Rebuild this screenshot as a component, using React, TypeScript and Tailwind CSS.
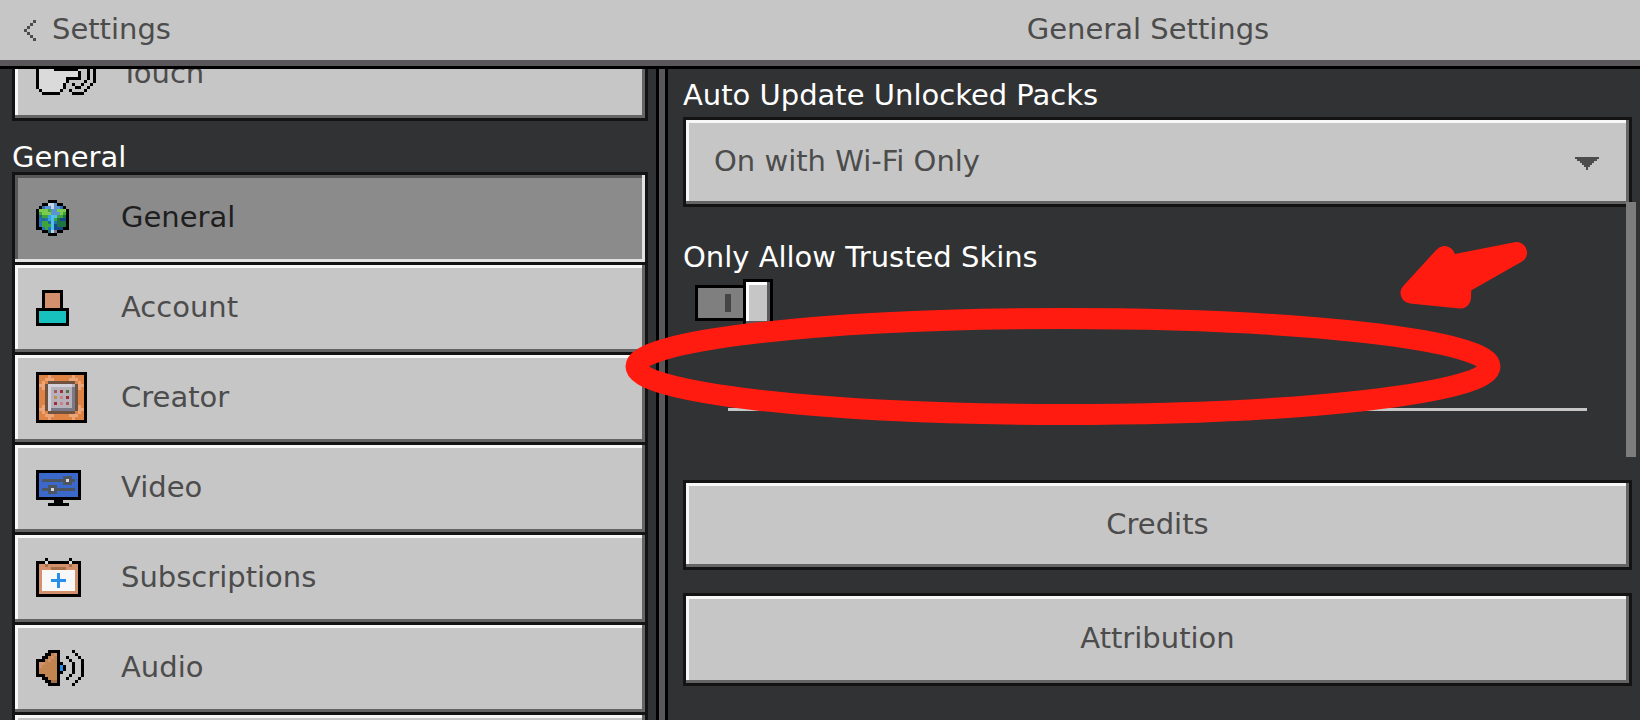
import React, { useState } from 'react';
import clsx from 'clsx';

const PALETTE: Record<string, string> = {
  K: '#000000',
  W: '#f8f8f8',
  L: '#c4d6e6',
  G: '#3fa53a',
  h: '#7ccb4f',
  E: '#1d7443',
  D: '#1f6f86',
  b: '#5b93d0',
  B: '#2570b8',
  C: '#3aa0de',
  c: '#4cc0f0',
  N: '#17488f',
  S: '#d3906c',
  T: '#17c1bd',
  O: '#df8344',
  P: '#eba579',
  R: '#6f5340',
  F: '#d3d0d9',
  f: '#b7b1bb',
  g: '#7b7888',
  r: '#9a3036',
  m: '#a35a5a',
  p: '#c98287',
  e: '#4c7340',
  y: '#bb9248',
  V: '#3b69cb',
  s: '#4d5560',
  q: '#a87048',
  u: '#2a8fea',
  Q: '#c2854f',
  w: '#dadada',
};

const GLOBE = [
  '....KKK....',
  '..KKLLbKK..',
  '.KBbbLbbBK.',
  'KhhhGbbhhhK',
  'KGhhhbbbhGK',
  'KDGGCccGGEK',
  'KBDBCcGENNK',
  'KBGGDcBEEEK',
  'KBGGGcNEEEK',
  'KKBGBcNNNKK',
  '..KKDLgKK..',
  '....KKK....',
];

const ACCOUNT = [
  '..KKKKKKK..',
  '..KSSSSSK..',
  '..KSSSSSK..',
  '..KSSSSSK..',
  '..KSSSSSK..',
  '..KSSSSSK..',
  'KKKKKKKKKKK',
  'KTTTTTTTTTK',
  'KTTTTTTTTTK',
  'KTTTTTTTTTK',
  'KTTTTTTTTTK',
  'KKKKKKKKKKK',
];

const CREATOR = [
  'KKKKKKKKKKKKKKKKK',
  'KOOOPOOOOOOOPOOOK',
  'KOOPPPOOOOOPPPOOK',
  'KOPORRRRRRRRROPOK',
  'KPPRFFFFFFFFfRPPK',
  'KOPRFfffffffgRPOK',
  'KOORFfmfrfefgROOK',
  'KOORFfffffffgROOK',
  'KOORFfyfpfrfgROOK',
  'KOORFfffffffgROOK',
  'KOORFfrfpfmfgROOK',
  'KOPRFfffffffgRPOK',
  'KPPRFggggggggRPPK',
  'KOPORRRRRRRRROPOK',
  'KOOPPPOOOOOPPPOOK',
  'KOOOPOOOOOOOPOOOK',
  'KKKKKKKKKKKKKKKKK',
];

const VIDEO = [
  'KKKKKKKKKKKKKKK',
  'KVVVVVVVVVVVVVK',
  'KVVVVVVVVsssVVK',
  'KVsssssssswssVK',
  'KVVVVVVVVsssVVK',
  'KVVVsssVVVVVVVK',
  'KVssswsssssssVK',
  'KVVVsssVVVVVVVK',
  'KVVVVVVVVVVVVVK',
  'KKKKKKKKKKKKKKK',
  '......KKK......',
  '....KKKKKKK....',
];

const SUBSCRIPTIONS = [
  '...K.......K...',
  'KKKwKKKKKKKwKKK',
  'KSSqSSSSSSSqSSK',
  'KSSSSqqqqqSSSSK',
  'KSWWWWWWWWWWWSK',
  'KSWWWWWuWWWWWSK',
  'KSWWWWWuWWWWWSK',
  'KSWWWuuuuuWWWSK',
  'KSWWWWWuWWWWWSK',
  'KSWWWWWuWWWWWSK',
  'KSWWWWWWWWWWWSK',
  'KSSSSSSSSSSSSSK',
  'KKKKKKKKKKKKKKK',
];

const AUDIO = [
  '....KKKK....K...',
  '...KKQSK.....K..',
  '..KKQSQK..K...K.',
  'KKKQSQQK...K...K',
  'KSSQQQQKK...K..K',
  'KSQQQQQKuK..K..K',
  'KQQQQQQKuK..K..K',
  'KQQQQQQKK...K..K',
  'KKKQQQQK...K...K',
  '..KKQQQK..K...K.',
  '...KKqqK.....K..',
  '....KKKK....K...',
];

const TOUCH = [
  '....KKK.............',
  '...KwwwK............',
  '...KwwwK......K.....',
  '..KwwwwK.......K.K..',
  '.KwwwwwwK.......K.K.',
  'KwwwwwKKKKKKKK...K.K',
  'KwwwwwwwwwwwwwK..K.K',
  'KwwwwwwwwwwwwwK..K.K',
  'KwwwwwwwwwKKKKK..K.K',
  'KwwwwwwwwwK.....K..K',
  'KwwwwwwwwK..K..K..K.',
  'KwwwwwwwwK...KK..K..',
  '.KwwwwwwK..K....K...',
  '..KKKKKK....KKKK....',
];

interface PixelIconProps {
  rows: string[];
}

// Every character of a row is one art pixel, drawn 3px wide
const PixelIcon: React.FC<PixelIconProps> = ({ rows }) => {
  const cols = rows[0].length;
  return (
    <svg
      width={cols * 3}
      height={rows.length * 3}
      viewBox={`0 0 ${cols} ${rows.length}`}
      shapeRendering="crispEdges"
      aria-hidden="true"
    >
      {rows.flatMap((row, y) =>
        row.split('').map((cell, x) =>
          cell === '.' ? null : <rect key={`${x}-${y}`} x={x} y={y} width={1} height={1} fill={PALETTE[cell]} />
        )
      )}
    </svg>
  );
};

const RAISED =
  'border-[3px] border-[#131313] bg-[#c6c6c6] text-[#4c4c4c] shadow-[inset_-3px_-3px_0_#636463,inset_3px_3px_0_#f7f7f7]';
const PRESSED =
  'border-[3px] border-[#131313] bg-[#8b8b8b] text-[#1e1e1e] shadow-[inset_-3px_-3px_0_#e2e2e2,inset_3px_3px_0_#585859]';

interface NavButtonProps {
  label: string;
  rows?: string[];
  active?: boolean;
  onClick?: () => void;
}

const NavButton: React.FC<NavButtonProps> = ({ label, rows, active = false, onClick }) => (
  <button
    type="button"
    onClick={onClick}
    className={clsx(
      'flex h-[93px] w-full shrink-0 items-center gap-[25px] px-[21px] pb-[2px] text-left',
      active ? PRESSED : RAISED
    )}
  >
    <span className="flex w-[60px] shrink-0 items-center">{rows && <PixelIcon rows={rows} />}</span>
    <span>{label}</span>
  </button>
);

const NAV_ITEMS = [
  { label: 'General', rows: GLOBE },
  { label: 'Account', rows: ACCOUNT },
  { label: 'Creator', rows: CREATOR },
  { label: 'Video', rows: VIDEO },
  { label: 'Subscriptions', rows: SUBSCRIPTIONS },
  { label: 'Audio', rows: AUDIO },
];

const Sidebar: React.FC = () => {
  const [selected, setSelected] = useState('General');

  return (
    <nav className="flex w-[40%] shrink-0 flex-col overflow-hidden pr-2 pl-3">
      {/* last entry of the section above, scrolled half out of view */}
      <div className="flex h-[52px] shrink-0 flex-col justify-end overflow-hidden">
        <NavButton label="Touch" rows={TOUCH} />
      </div>
      <h2 className="mt-5 h-[31px] shrink-0 leading-[33px] text-white">General</h2>
      <div className="flex flex-col -space-y-[3px]">
        {NAV_ITEMS.map(({ label, rows }) => (
          <NavButton
            key={label}
            label={label}
            rows={rows}
            active={selected === label}
            onClick={() => setSelected(label)}
          />
        ))}
        <NavButton label="" />
      </div>
    </nav>
  );
};

const TrustedSkinsToggle: React.FC = () => {
  const [on, setOn] = useState(true);

  return (
    <label className="relative ml-3 flex h-12 w-[78px] items-center">
      <input
        type="checkbox"
        aria-label="Only Allow Trusted Skins"
        className="sr-only"
        checked={on}
        onChange={() => setOn(!on)}
      />
      <span className="flex h-9 w-full items-center border-[3px] border-black bg-[#7f7f7f]">
        <span className="ml-[27px] h-[18px] w-[6px] bg-[#444444]" />
      </span>
      <span
        className={clsx(
          'absolute top-0 h-12 w-[30px] border-[3px] border-black bg-[#c6c6c6] shadow-[inset_-3px_-3px_0_#5a5a5c,inset_3px_3px_0_#ffffff]',
          on ? 'right-0' : 'left-0'
        )}
      />
    </label>
  );
};

const GeneralPanel: React.FC = () => (
  <main className="relative flex flex-1 flex-col overflow-hidden pr-2 pl-[15px]">
    <label htmlFor="auto-update" className="mt-3 h-9 leading-[29px] text-white">
      Auto Update Unlocked Packs
    </label>
    <div className="relative">
      <select id="auto-update" className={clsx('h-[90px] w-full appearance-none pl-7', RAISED)}>
        <option>On with Wi-Fi Only</option>
      </select>
      <svg
        className="pointer-events-none absolute top-10 right-[33px]"
        width="24"
        height="13"
        viewBox="0 0 24 13"
        shapeRendering="crispEdges"
        aria-hidden="true"
      >
        <path
          fill="#4c4c4c"
          d="M0 0h24v2h-2v2h-3v2h-2v2h-2v2h-2v3h-2v-3h-2v-2h-2v-2h-2v-2h-3v-2h-2z"
        />
      </svg>
    </div>
    <h2 className="mt-[34px] h-[38px] leading-[33px] text-white">Only Allow Trusted Skins</h2>
    <TrustedSkinsToggle />
    <hr className="mx-[45px] mt-[81px] h-[3px] border-0 bg-[#c6c6c6]" />
    <button type="button" className={clsx('mt-[69px] h-[90px]', RAISED)}>
      Credits
    </button>
    <button type="button" className={clsx('mt-[23px] h-[93px] pb-[2px]', RAISED)}>
      Attribution
    </button>
    <div className="absolute top-[133px] right-1 h-[255px] w-[10px] bg-[#7d7d7d]" />
  </main>
);

// Hand-drawn ring and arrow that lie over the whole screen
const Markup: React.FC = () => (
  <svg
    className="pointer-events-none absolute top-[236px] left-[624px]"
    width="904"
    height="192"
    viewBox="624 236 904 192"
    fill="none"
    stroke="#ff1b10"
    strokeWidth="21"
    strokeLinejoin="round"
    aria-hidden="true"
  >
    <ellipse cx="1063" cy="366.5" rx="427" ry="48" />
    <path fill="#ff1b10" d="M1411 293 1444.500 256.500 1448 266 1516.500 252.500 1461 284 1460.500 298z" />
  </svg>
);

const App: React.FC = () => (
  <div className="relative flex h-screen flex-col overflow-hidden bg-[#313233] font-['DejaVu_Sans',sans-serif] text-[29px]">
    <header className="flex h-[66px] shrink-0 items-center border-b-[6px] border-[#59575a] bg-[#c6c6c6] text-[#4c4c4c]">
      <button type="button" className="flex w-[40%] items-center gap-4 pl-6">
        <svg width="12" height="21" viewBox="0 0 4 7" fill="#4c4c4c" shapeRendering="crispEdges" aria-hidden="true">
          <path d="M3 0h1v1h-1v1h-1v1h-1v1h1v1h1v1h1v1h-1v-1h-1v-1h-1v-1h-1v-1h1v-1h1v-1h1z" />
        </svg>
        Settings
      </button>
      <h1 className="flex-1 text-center">General Settings</h1>
    </header>
    <div className="flex min-h-0 flex-1 border-t-[3px] border-black">
      <Sidebar />
      <div className="w-3 shrink-0 border-x-[3px] border-black bg-[#59575a]" />
      <GeneralPanel />
    </div>
    <Markup />
  </div>
);

export default App;
